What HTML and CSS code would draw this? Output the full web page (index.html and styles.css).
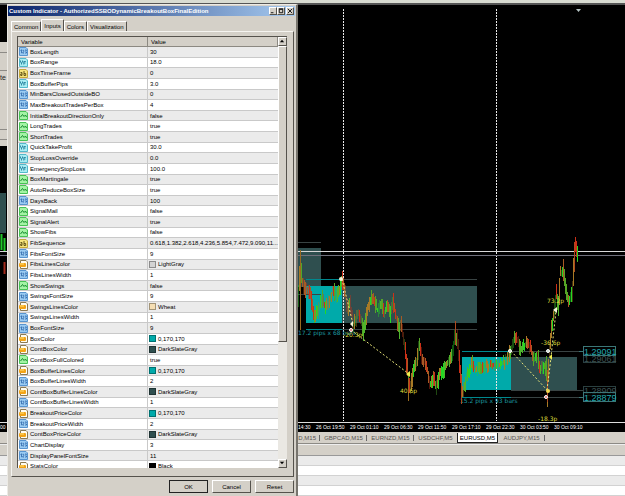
FILE: index.html
```html
<!DOCTYPE html>
<html lang="en">
<head>
<meta charset="utf-8">
<title>Custom Indicator</title>
<link rel="stylesheet" href="styles.css">
</head>
<body>
<svg class="symbols" aria-hidden="true">
  <symbol id="i-int" viewBox="0 0 9 9"><path d="M.5.5h6.500l1.500 1.500v6.500h-8z" fill="#9acbf2" stroke="#5794cf"/><path d="M1.500 3.500l1-.7v3.400M3.500 3.300h1.200v1.200L3.500 6h1.500M6 3h1.500L6.600 4.300 7.500 5v1H6" fill="none" stroke="#2b65a8" stroke-width=".8"/></symbol>
  <symbol id="i-dbl" viewBox="0 0 9 9"><path d="M.5.5h6.500l1.500 1.500v6.500h-8z" fill="#a9edf3" stroke="#52b9cb"/><path d="M1.500 2.500v1.500l1 1 1-1V2.500M2.500 5v1.500M4.800 6.500v-3h2M5 5h1.500" fill="none" stroke="#217f9b" stroke-width=".9"/></symbol>
  <symbol id="i-str" viewBox="0 0 9 9"><path d="M.5.5h6.500l1.500 1.500v6.500h-8z" fill="#f6e57c" stroke="#c4a83a"/><path d="M1.500 3.500h1.500v3H1.700V5H3M5 2v4.500h1.700v-2H5" fill="none" stroke="#5b4c12" stroke-width=".9"/></symbol>
  <symbol id="i-bool" viewBox="0 0 9 9"><path d="M.5.5h6.500l1.500 1.500v6.500h-8z" fill="#a4f3a5" stroke="#47c255"/><path d="M1.500 6l2-2.500 1.500 2L6.500 4l1 2" fill="none" stroke="#128a2c"/></symbol>
  <symbol id="i-col" viewBox="0 0 9 9"><path d="M1.500.5H7l1.500 1.500v6.500h-7z" fill="#fffdf2" stroke="#8b7a52"/><rect y="3" width="7" height="4" rx="1" fill="#f3a416"/><path d="M1 4h4" stroke="#ffe17a"/></symbol>
</svg>

<main class="app">
  <div class="toolbar-edge"></div>
  <svg class="chart" viewBox="0 0 625 417" preserveAspectRatio="xMinYMin slice" role="img" aria-label="EURUSD price chart">
    <g transform="translate(0 -5)">
      <rect y="5" width="625" height="417" fill="#000"/>
      <path d="M576 9h5l-2.500 3z" fill="#b5c4c4"/>
      <rect y="42" width="7" height="104" fill="#d4d0c8"/>
      <path d="M0 52.500h7M0 70.500h7M0 129.500h7M0 139.500h7" stroke="#8d8b86"/>
      <text x="0" y="80" class="t-edge">te</text>
      <rect y="193" width="6" height="40" fill="#2f4f4f"/>
      <path d="M1.500 234v16M4.500 238v14" stroke="#1fc829" stroke-width="2"/><path d="M4.500 262v12" stroke="#a32a1c" stroke-width="2"/>

      <rect x="298" y="248" width="23" height="39" fill="#2f4f4f"/>
      <rect x="306" y="286" width="36" height="37" fill="#00aaaa"/>
      <rect x="342" y="286" width="135" height="37" fill="#2f4f4f"/>
      <rect x="462" y="357" width="49" height="33" fill="#00aaaa"/>
      <rect x="511" y="357" width="66" height="33" fill="#2f4f4f"/>
      <path d="M343.500 9V421M496.500 9V421" stroke="#e8e8e8" stroke-dasharray="2 1"/>
      <path d="M298 242.500h23M298 294.500h23M342 279.500h135M306 329.500h171M511 351.500h72M511 397.500h72M511 390.500h72" stroke="#394343"/>
      <path d="M306 279.500h36M306 329.500h36M462 351.500h49M462 397.500h49" stroke="#00888e"/>
      <path d="M0 251.500H625" stroke="#d8d8d8"/><path d="M0 255.500H625" stroke="#70707c"/>
      <text x="298" y="335" class="t-teal">17.2 pips x 68 bars</text>
      <text x="460" y="403" class="t-teal">15.2 pips x 93 bars</text>
      <g id="candles"></g>
      <path d="M342 279l11 45M351 330l58 44M511 351l36 39M547 390l3-24 6-55" fill="none" stroke="#e9e67a" stroke-dasharray="2 2"/>
      <g fill="#f4f4d8">
        <circle cx="341" cy="279" r="2"/><path d="M350 324l3-3v6z"/><path d="M406 374l4-3v6z" fill="#f2ee50"/><path d="M553 310l4-3v6z"/><path d="M549 357l3-3v6z" fill="#f2ee50"/><circle cx="548" cy="391" r="2" fill="#f2d850"/>
      </g>
      <g fill="#c9d9cc" stroke="#fff"><circle cx="351" cy="330" r="1.500" fill="#d66"/><circle cx="510" cy="351" r="1.500"/><circle cx="548" cy="351" r="1.500"/><circle cx="546" cy="397" r="1.500" fill="#d66"/></g>
      <g class="t-yellow"><text x="343" y="337">-20.3p</text><text x="400" y="393">40.6p</text><text x="547" y="303">73.2p</text><text x="541" y="345">-36.6p</text><text x="538" y="421">-18.3p</text></g>
      <g class="t-price">
        <g fill="#3d5252" stroke="#2b4040"><rect x="583.500" y="353.500" width="32" height="9" fill="none"/><text x="584" y="362" stroke="none">1.29061</text><rect x="583.500" y="386.500" width="32" height="9" fill="none"/><text x="584" y="394" stroke="none">1.28909</text></g>
        <g fill="#20a8ad" stroke="#3c7778"><rect x="583.500" y="346.500" width="32" height="9" class="box"/><text x="584" y="355" stroke="none">1.29091</text><rect x="583.500" y="392.500" width="32" height="9" class="box"/><text x="584" y="401" stroke="none">1.28879</text><path d="M579 351.500h4M579 397.500h4"/></g>
      </g>
    </g>
  </svg>
  <div class="axis"><span>00</span><span>14:30</span><span>26 Oct 19:50</span><span>29 Oct 01:10</span><span>29 Oct 06:30</span><span>29 Oct 11:50</span><span>29 Oct 17:10</span><span>29 Oct 22:30</span><span>30 Oct 03:50</span><span>30 Oct 09:10</span></div>
  <nav class="sheets"><button class="first">D,M15</button><button>GBPCAD,M15</button><button>EURNZD,M15</button><button class="before">USDCHF,M5</button><button class="current">EURUSD,M5</button><button>AUDJPY,M15</button></nav>
  <div class="terminal"><div class="terminal-head"></div><div></div><div></div><div></div><div></div></div>
</main>

<section class="dialog" role="dialog" aria-labelledby="dialog-title">
  <header class="titlebar">
    <h1 id="dialog-title">Custom Indicator - AuthorizedSSBODynamicBreakoutBoxFinalEdition</h1>
    <button aria-label="Minimize"><svg viewBox="0 0 7 7"><path d="M1 5.500h3"/></svg></button>
    <button aria-label="Maximize"><svg viewBox="0 0 7 7"><path d="M1.500 1.500h4v4h-4zM1 1h5"/></svg></button>
    <button class="close" aria-label="Close"><svg viewBox="0 0 7 7"><path d="M1 1l5 5M6 1L1 6"/></svg></button>
  </header>
  <div class="tabs" role="tablist"><button role="tab">Common</button><button role="tab" class="selected" aria-selected="true">Inputs</button><button role="tab">Colors</button><button role="tab">Visualization</button></div>
  <div class="panel">
    <div class="list">
      <div class="grid-view">
        <table>
          <thead><tr><th>Variable</th><th>Value</th></tr></thead>
          <tbody id="rows"></tbody>
        </table>
      </div>
      <div class="scrollbar"><button aria-label="Scroll up"><svg viewBox="0 0 7 7"><path d="M1 5h5L3.500 2z"/></svg></button><div class="thumb"></div><div class="track"></div><button aria-label="Scroll down"><svg viewBox="0 0 7 7"><path d="M1 2h5L3.500 5z"/></svg></button></div>
    </div>
  </div>
  <footer><button class="default">OK</button><button>Cancel</button><button>Reset</button></footer>
</section>
<script src="app.js"></script>
</body>
</html>
```
FILE: styles.css
```css
* { box-sizing: border-box; }
body {
  margin: 0;
  height: 100vh;
  position: relative;
  overflow: hidden;
  background: #fff;
  color: #000;
  font: 6px/8px "Liberation Sans", sans-serif;
}
button { font: inherit; color: inherit; margin: 0; padding: 0; border: 0; background: none; }
.symbols { position: absolute; width: 0; height: 0; }

.app { display: flex; flex-direction: column; height: 100%; }
.toolbar-edge { flex: none; height: 5px; background: #d9dcd2; border-bottom: 2px solid #555; }
.chart { flex: 1; min-height: 0; width: 100%; display: block; }
.t-edge { font-size: 7px; fill: #222; }
.t-teal { font: 6px "DejaVu Sans", sans-serif; fill: #1d9ba0; }
.t-yellow { font: 6px "DejaVu Sans", sans-serif; fill: #dfdc3c; }
.t-price { font: 9px "Liberation Sans", sans-serif; }
.t-price .box { fill: #000a; }
.axis {
  flex: none;
  display: grid;
  grid-template-columns: 298px 18px repeat(8, 34px);
  height: 10px;
  background: #000;
  border-top: 1px solid #ddd;
  color: #fff;
  font-size: 5px;
  white-space: nowrap;
}
.sheets {
  flex: none;
  display: flex;
  height: 12px;
  padding: 1px 0 0 273px;
  background: #d4d0c8;
  border-bottom: 1px solid #8c8a85;
  color: #55534f;
}
.sheets button { width: 47px; line-height: 8px; background: linear-gradient(#666, #666) right center / 1px 6px no-repeat; white-space: nowrap; }
.sheets .first { text-align: right; padding-right: 4px; }
.sheets button.before { width: 43px; background: none; }
.sheets .current { width: 41px; background: #fff; color: #000; border: solid #222; border-width: 0 1px 1px; }
.terminal { flex: none; height: 52px; overflow: hidden; border-top: 1px solid #eee; background: #fff; }
.terminal div { height: 10px; border-bottom: 1px solid #d2d2d2; }
.terminal div:nth-child(even) { background: #ebebeb; }
.terminal .terminal-head { height: 11px; background: #d4d0c8; border-color: #999; }

.dialog {
  position: absolute;
  top: 4px;
  left: 7px;
  bottom: 0;
  width: 291px;
  display: flex;
  flex-direction: column;
  background: #d4d0c8;
  border: solid;
  border-width: 1px 2px 0 1px;
  border-color: #eceae5 #77746d #77746d #eceae5;
}
.titlebar {
  flex: none;
  display: flex;
  align-items: center;
  height: 10px;
  margin: 1px 1px 0 0;
  padding: 0 1px 0 1px;
  color: #fff;
  background: linear-gradient(90deg, #0a246a, #a6caf0);
}
.titlebar h1 { flex: 1; margin: 0; font: bold 6px/9px "Liberation Sans", sans-serif; white-space: nowrap; }
.titlebar button, .scrollbar button {
  width: 8px;
  height: 8px;
  background: #d4d0c8;
  border: 1px solid;
  border-color: #fff #55524c #55524c #fff;
  display: grid;
}
.titlebar .close { margin-left: 1px; }
.titlebar svg, .scrollbar svg { width: 6px; height: 6px; display: block; stroke: #000; fill: none; }
.scrollbar svg { fill: #000; stroke: none; }

.tabs { flex: none; display: flex; align-items: flex-end; height: 15px; padding-left: 3px; }
.tabs button { height: 10px; padding: 0 2px; border: solid; border-width: 1px 1px 0 1px; border-color: #fff #55524c #55524c #fff; border-radius: 1px 1px 0 0; }
.tabs .selected { height: 12px; }
.panel {
  flex: 1;
  min-height: 0;
  margin: 0 2px 0 3px;
  padding: 4px 6px 8px 5px;
  border: 1px solid;
  border-color: #f5f4f0 #55524c #55524c #f5f4f0;
}
.list { display: flex; height: 100%; border: solid #55524c; border-width: 1px 0 0 1px; background: #fff; }
.grid-view { flex: 1; min-width: 0; overflow: hidden; }
table { width: 100%; height: 435px; border-collapse: separate; border-spacing: 0; table-layout: fixed; }
th, td { padding: 0 0 0 2px; text-align: left; white-space: nowrap; overflow: hidden; line-height: 8px; border-right: 1px solid #c9c9c9; border-bottom: 1px solid #c9c9c9; }
th { height: 10px; padding-left: 3px; font-weight: normal; background: #d4d0c8; border-color: #8c8982; }
th:first-child { width: 130px; }
tbody tr:nth-child(odd) { background: #ebebeb; }
td:first-child { padding-left: 1px; }
td:last-child { border-right: 0; }
.name { display: flex; align-items: center; gap: 2px; height: 9px; }
.name svg { width: 9px; height: 9px; }
.value { display: flex; align-items: center; gap: 2px; height: 9px; }
.swatch { width: 7px; height: 7px; margin-left: -1px; border: 1px solid #0005; }
.scrollbar { flex: none; width: 9px; display: flex; flex-direction: column; background: #eae8e3; }
.scrollbar button { width: 9px; height: 9px; }
.thumb { flex: 5; background: #d4d0c8; border: 1px solid; border-color: #fff #55524c #55524c #fff; }
.track { flex: 2; }

footer { flex: none; display: flex; justify-content: flex-end; gap: 4px; height: 19px; padding: 3px 2px 3px 0; }
footer button { width: 39px; height: 13px; border: 1px solid; border-color: #fff #55524c #55524c #fff; }
footer .default { border-color: #222; }
```
FILE: app.js
```js
const inputs = `int BoxLength 30
dbl BoxRange 18.0
str BoxTimeFrame 0
dbl BoxBufferPips 3.0
int MinBarsClosedOutsideBO 0
int MaxBreakoutTradesPerBox 4
bool InitialBreakoutDirectionOnly false
bool LongTrades true
bool ShortTrades true
dbl QuickTakeProfit 30.0
dbl StopLossOverride 0.0
dbl EmergencyStopLoss 100.0
bool BoxMartingale true
bool AutoReduceBoxSize true
int DaysBack 100
bool SignalMail false
bool SignalAlert true
bool ShowFibs false
str FibSequence 0.618,1.382,2.618,4.236,5.854,7.472,9.090,11...
int FibsFontSize 9
col FibsLinesColor LightGray
int FibsLinesWidth 1
bool ShowSwings false
int SwingsFontSize 9
col SwingsLinesColor Wheat
int SwingsLinesWidth 1
int BoxFontSize 9
col BoxColor 0,170,170
col ContBoxColor DarkSlateGray
bool ContBoxFullColored true
col BoxBufferLinesColor 0,170,170
int BoxBufferLinesWidth 2
col ContBoxBufferLinesColor DarkSlateGray
int ContBoxBufferLinesWidth 1
col BreakoutPriceColor 0,170,170
int BreakoutPriceWidth 2
col ContBoxPriceColor DarkSlateGray
int ChartDisplay 3
int DisplayPanelFontSize 11
col StatsColor Black`.split("\n").map(line => line.split(" "));

document.getElementById("rows").innerHTML = inputs.map(([type, name, value]) => {
  const color = value.includes(",") ? `rgb(${value})` : value;
  const swatch = type === "col" ? `<span class="swatch" style="background:${color}"></span>` : "";
  return `<tr><td><div class="name"><svg aria-hidden="true"><use href="#i-${type}"/></svg>${name}</div></td><td><div class="value">${swatch}${value}</div></td></tr>`;
}).join("");

// Price path as x,y turning points; candles are drawn between them.
const path = [[298,293],[300,265],[302,285],[305,290],[309,292],[311,300],[314,318],[318,310],[322,299],[325,308],[330,297],[333,289],[336,298],[339,290],[342,280],[345,295],[347,309],[350,305],[353,326],[358,313],[361,322],[363,332],[367,310],[371,298],[374,302],[377,310],[381,306],[384,312],[387,307],[390,314],[393,303],[396,318],[399,330],[401,325],[404,345],[408,378],[410,388],[413,372],[416,362],[419,345],[422,360],[425,363],[428,375],[430,384],[433,378],[436,388],[439,375],[443,372],[446,363],[449,360],[452,352],[455,332],[457,342],[460,372],[462,393],[464,386],[468,372],[472,363],[475,370],[480,366],[484,368],[490,364],[496,366],[500,364],[505,362],[508,358],[511,348],[514,338],[517,340],[520,349],[523,346],[527,341],[531,352],[534,360],[537,355],[540,370],[544,366],[546,370],[547,394],[549,350],[552,322],[555,302],[556,293],[558,307],[560,272],[563,270],[566,292],[569,302],[572,290],[574,256],[575,247],[577,255]];
let seed = 7;
const random = () => (seed = (seed * 16807) % 2147483647) / 2147483647;
let svg = "";
let segment = 0;
for (let x = 298; x < 578; x++) {
  while (segment < path.length - 2 && path[segment + 1][0] <= x) segment++;
  const [x0, y0] = path[segment];
  const [x1, y1] = path[segment + 1];
  const slope = (y1 - y0) / (x1 - x0);
  const mid = y0 + slope * (x - x0);
  const reach = Math.min(9, Math.abs(slope) / 2 + 1);
  const top = Math.round(mid - reach - random() * 7);
  const bottom = Math.round(mid + reach + random() * 7);
  const palette = slope < 0 ? ["#24d824", "#4fb52c", "#a87a26"] : ["#cc3018", "#a85a24", "#55a526"];
  const faint = random() < .3;
  svg += `<path d="M${x}.5 ${top}V${bottom}" stroke="${palette[Math.floor(random() * 3)]}" opacity="${faint ? .4 : 1}"/>`;
}
svg += `<path d="M300.5 250v80M408.500 378v23" stroke="#9a6a20"/><path d="M455.500 321v24M461.500 375v29M547.500 370v32M574.500 242v30" stroke="#b04a20"/><path d="M577.500 246v15" stroke="#24d824"/>`;
document.getElementById("candles").innerHTML = svg;
```
